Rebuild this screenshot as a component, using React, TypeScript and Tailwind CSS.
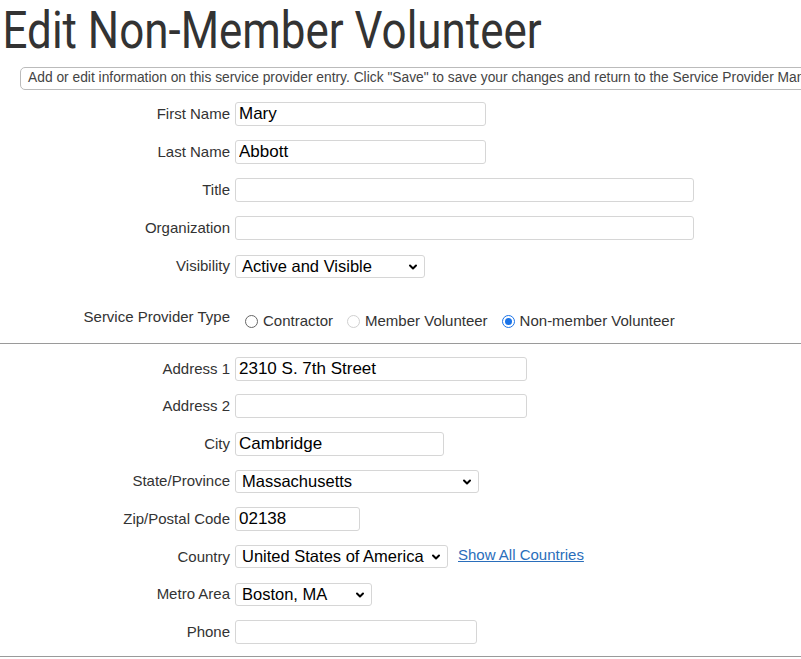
import { ChevronDown } from "lucide-react";

const labelCls =
  "w-[235px] shrink-0 pr-[5px] text-right text-[15px] text-[#333]";
const inputCls =
  "h-[24px] rounded-[3px] border border-[#d6d6d6] bg-white px-[3px] text-[17px] text-black outline-none";

function TextRow({
  label,
  value = "",
  width,
  h = 38,
}: {
  label: string;
  value?: string;
  width: number;
  h?: number;
}) {
  return (
    <div className="flex items-center" style={{ height: h }}>
      <label className={labelCls}>{label}</label>
      <input
        type="text"
        defaultValue={value}
        className={inputCls}
        style={{ width }}
      />
    </div>
  );
}

function SelectRow({
  label,
  value,
  width,
  h = 38,
  children,
}: {
  label: string;
  value: string;
  width: number;
  h?: number;
  children?: React.ReactNode;
}) {
  return (
    <div className="flex items-center" style={{ height: h }}>
      <label className={labelCls}>{label}</label>
      <div
        className="relative flex h-[23px] items-center rounded-[3px] border border-[#d6d6d6] bg-white pl-[6px] text-[16.5px] text-black"
        style={{ width }}
      >
        <span className="whitespace-nowrap">{value}</span>
        <ChevronDown
          className="absolute right-[5px] top-[5px] h-[12px] w-[12px] text-black"
          strokeWidth={4}
        />
      </div>
      {children}
    </div>
  );
}

function Radio({
  checked,
  disabled,
  label,
}: {
  checked?: boolean;
  disabled?: boolean;
  label: string;
}) {
  return (
    <label className="mr-[14px] flex items-center gap-[5px] text-[15px] text-[#333]">
      <span
        className={
          "flex h-[13px] w-[13px] items-center justify-center rounded-full border " +
          (checked
            ? "border-[#1a73e8]"
            : disabled
            ? "border-[#d0d0d0]"
            : "border-[#666]")
        }
      >
        {checked && <span className="h-[7px] w-[7px] rounded-full bg-[#1a73e8]" />}
      </span>
      {label}
    </label>
  );
}

export default function App() {
  const addr = 37.6;
  return (
    <div
      className="w-[801px] overflow-hidden bg-white"
      style={{ fontFamily: '"Liberation Sans", Arial, sans-serif' }}
    >
      <h1
        className="inline-block origin-left scale-x-[0.845] whitespace-nowrap pl-[3px] pt-[1px] text-[52px] leading-[60px] text-[#333]"
        style={{ fontFamily: "Roboto, sans-serif" }}
      >
        Edit Non-Member Volunteer
      </h1>

      <div className="ml-[20px] mt-[6px] flex h-[23px] w-[1000px] items-center rounded-[5px] border border-[#bbb] pl-[7px] text-[13.8px] whitespace-nowrap text-[#444]">
        Add or edit information on this service provider entry. Click "Save"
        to save your changes and return to the Service Provider Manager.
      </div>

      <div className="mt-[5px]">
        <TextRow label="First Name" value="Mary" width={251} />
        <TextRow label="Last Name" value="Abbott" width={251} />
        <TextRow label="Title" width={459} />
        <TextRow label="Organization" width={459} />
        <SelectRow label="Visibility" value="Active and Visible" width={190} />
      </div>

      <div className="mt-[22px] flex h-[32px] items-start">
        <label className="w-[235px] shrink-0 pr-[5px] text-right text-[15px] leading-[20px] text-[#333]">
          Service Provider Type
        </label>
        <div className="ml-[10px] mt-[3px] flex items-center">
          <Radio label="Contractor" />
          <Radio label="Member Volunteer" disabled />
          <Radio label="Non-member Volunteer" checked />
        </div>
      </div>

      <div className="mt-[4px] border-t border-[#9a9a9a]" />

      <div className="mt-[6px]">
        <TextRow label="Address 1" value="2310 S. 7th Street" width={292} h={addr} />
        <TextRow label="Address 2" width={292} h={addr} />
        <TextRow label="City" value="Cambridge" width={209} h={addr} />
        <SelectRow label="State/Province" value="Massachusetts" width={244} h={addr} />
        <TextRow label="Zip/Postal Code" value="02138" width={125} h={addr} />
        <SelectRow
          label="Country"
          value="United States of America"
          width={213}
          h={addr}
        >
          <a
            href="#"
            className="ml-[10px] -mt-[4px] text-[15px] text-[#2a6ebb] underline"
          >
            Show All Countries
          </a>
        </SelectRow>
        <SelectRow label="Metro Area" value="Boston, MA" width={137} h={addr} />
        <TextRow label="Phone" width={242} h={addr} />
      </div>

      <div className="mt-[5px] border-t border-[#9a9a9a]" />
      <div className="h-[20px]" />
    </div>
  );
}
